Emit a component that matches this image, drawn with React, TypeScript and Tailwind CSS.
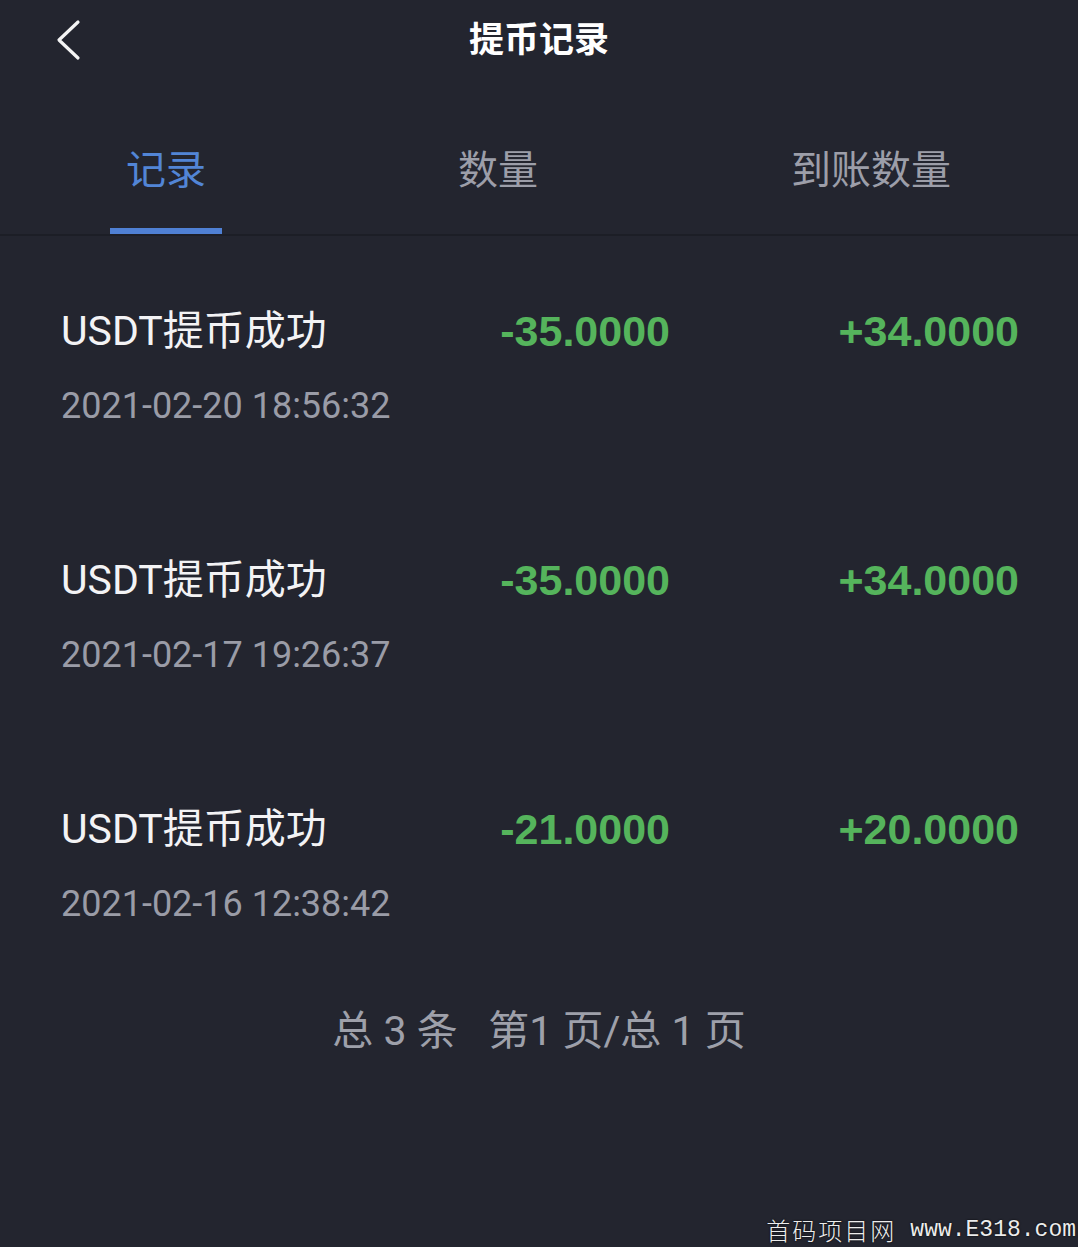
import React from 'react';

const records = [
    { title: 'USDT提币成功', time: '2021-02-20 18:56:32', amount: '-35.0000', received: '+34.0000' },
    { title: 'USDT提币成功', time: '2021-02-17 19:26:37', amount: '-35.0000', received: '+34.0000' },
    { title: 'USDT提币成功', time: '2021-02-16 12:38:42', amount: '-21.0000', received: '+20.0000' },
];

const tabs = ['记录', '数量', '到账数量'];

export default function App() {
    return (
        <div
            className="relative min-h-[1247px] w-[1078px] overflow-hidden bg-[#23252f]"
            style={{ fontFamily: "Roboto, 'Noto Sans CJK SC', sans-serif" }}
        >
            {/* Header */}
            <div className="relative flex h-[80px] items-center justify-center">
                <button className="absolute left-[50px] top-[18px] flex h-[44px] w-[34px] items-center justify-center">
                    <svg width="28" height="42" viewBox="0 0 28 42" fill="none">
                        <path d="M25 3 L6 21 L25 39" stroke="#f4f4f4" strokeWidth="3.2" strokeLinecap="round" strokeLinejoin="round" />
                    </svg>
                </button>
                <h1 className="text-[35px] font-bold leading-none text-white">提币记录</h1>
            </div>

            {/* Tabs */}
            <div className="grid h-[156px] grid-cols-[332px_332px_1fr] border-b-2 border-[#1c1e26]">
                {tabs.map((tab, idx) => (
                    <div key={tab} className="flex flex-col items-center justify-end">
                        <span
                            className={`text-[40px] leading-[48px] ${idx === 0 ? 'text-[#5285d6]' : 'text-[#9c9ea9]'}`}
                        >
                            {tab}
                        </span>
                        <div className={`mt-[33px] h-[6px] w-[112px] ${idx === 0 ? 'bg-[#4f80d4]' : 'bg-transparent'}`} />
                    </div>
                ))}
            </div>

            {/* Records */}
            <div className="flex flex-col gap-[130px] pl-[61px] pr-[59px] pt-[71px]">
                {records.map((r, idx) => (
                    <div key={idx} className="flex flex-col">
                        <div className="flex h-[48px] items-center">
                            <span className="flex-1 text-[41px] leading-[48px] text-[#f3f3f5]">{r.title}</span>
                            <span
                                className="text-right text-[43px] font-bold leading-[48px] text-[#55b45c]"
                                style={{ fontFamily: "'Liberation Sans', Arial, sans-serif" }}
                            >
                                {r.amount}
                            </span>
                            <span
                                className="w-[349px] text-right text-[43px] font-bold leading-[48px] text-[#55b45c]"
                                style={{ fontFamily: "'Liberation Sans', Arial, sans-serif" }}
                            >
                                {r.received}
                            </span>
                        </div>
                        <div className="mt-[31px] h-[40px] text-[36px] leading-[40px] text-[#9a9ca7]">{r.time}</div>
                    </div>
                ))}
            </div>

            {/* Pagination */}
            <div className="mt-[83px] flex justify-center">
                <span className="text-[41px] leading-[48px] text-[#9ea0aa]">
                    总 3 条&nbsp;&nbsp;&nbsp;第1 页/总 1 页
                </span>
            </div>

            {/* Watermark */}
            <div
                className="absolute bottom-[3px] right-[2px] flex items-end gap-[14px] text-[24px] leading-[28px] text-[#ececec]"
                style={{ textShadow: '0 0 2px #000' }}
            >
                <span className="tracking-[2px]" style={{ fontFamily: "'Noto Sans CJK SC', serif", fontWeight: 300 }}>
                    首码项目网
                </span>
                <span className="text-[23px]" style={{ fontFamily: "'Liberation Mono', monospace" }}>
                    www.E318.com
                </span>
            </div>
        </div>
    );
}
